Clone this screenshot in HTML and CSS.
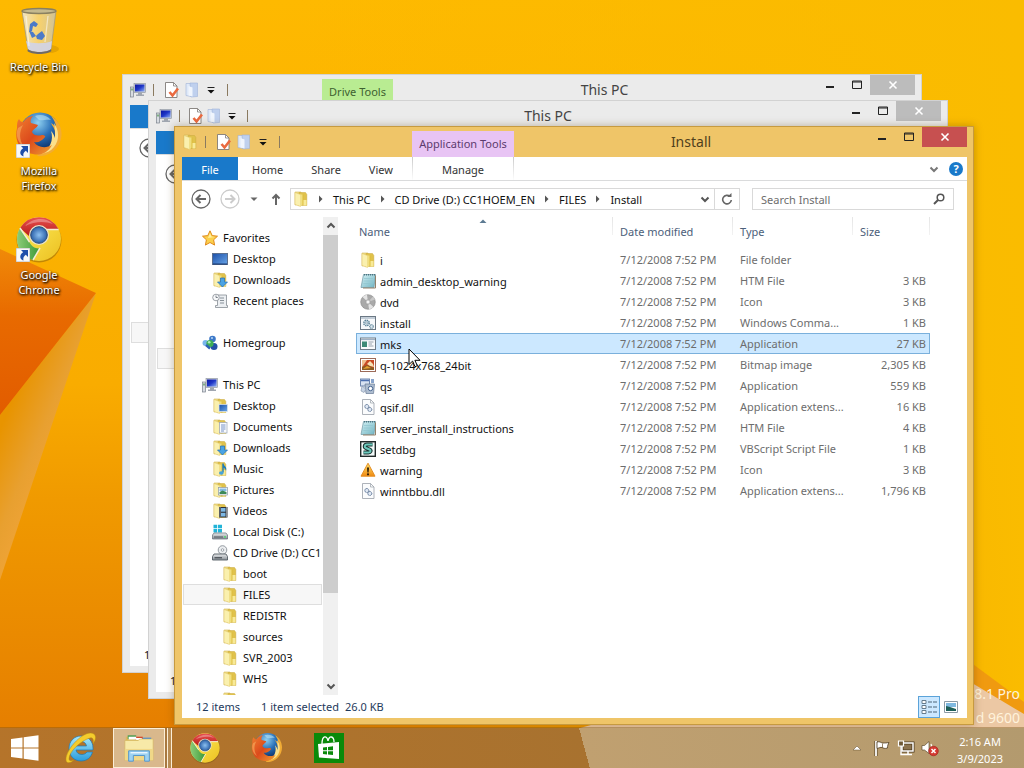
FILE: index.html
```html
<!DOCTYPE html>
<html lang="en">

<head>
    <meta charset="UTF-8">
    <meta name="viewport" content="width=device-width, initial-scale=1">
    <title>Install</title>
    <link rel="stylesheet" href="styles.css">
</head>

<body>

    <!-- Icon sprite -->
    <svg class="sprite" aria-hidden="true">
        <defs>
            <linearGradient id="g-folder" x1="0" y1="0" x2="1" y2="0">
                <stop offset="0" stop-color="#fbf0a0" />
                <stop offset="1" stop-color="#dcbc3c" />
            </linearGradient>
            <linearGradient id="g-blue" x1="0" y1="0" x2="1" y2="1">
                <stop offset="0" stop-color="#1b4fa8" />
                <stop offset="1" stop-color="#6aa6e8" />
            </linearGradient>
            <linearGradient id="g-screen" x1="0" y1="0" x2="1" y2="1">
                <stop offset="0" stop-color="#0a14a0" />
                <stop offset="0.5" stop-color="#2038c8" />
                <stop offset="1" stop-color="#8fb0f5" />
            </linearGradient>
            <linearGradient id="g-grey" x1="0" y1="0" x2="0" y2="1">
                <stop offset="0" stop-color="#e8eaec" />
                <stop offset="1" stop-color="#8a9096" />
            </linearGradient>
            <linearGradient id="g-note" x1="0" y1="0" x2="1" y2="1">
                <stop offset="0" stop-color="#d3f0f4" />
                <stop offset="1" stop-color="#6fb4c2" />
            </linearGradient>
            <linearGradient id="g-warn" x1="0" y1="0" x2="0" y2="1">
                <stop offset="0" stop-color="#ffe36a" />
                <stop offset="1" stop-color="#f08a12" />
            </linearGradient>
            <linearGradient id="g-bin" x1="0" y1="0" x2="1" y2="0">
                <stop offset="0" stop-color="#f0ead8" stop-opacity="0.9" />
                <stop offset="0.5" stop-color="#f4dc9c" stop-opacity="0.7" />
                <stop offset="1" stop-color="#c9c2a8" stop-opacity="0.9" />
            </linearGradient>
            <linearGradient id="g-fox" x1="0" y1="0" x2="1" y2="1">
                <stop offset="0" stop-color="#f08030" />
                <stop offset="0.5" stop-color="#dc4a1c" />
                <stop offset="1" stop-color="#f0a030" />
            </linearGradient>
            <radialGradient id="g-globe" cx="0.45" cy="0.25" r="0.7">
                <stop offset="0" stop-color="#8fd0f0" />
                <stop offset="0.5" stop-color="#2a70b8" />
                <stop offset="1" stop-color="#0c2a60" />
            </radialGradient>
            <radialGradient id="g-ball">
                <stop offset="0" stop-color="#8cc0f0" />
                <stop offset="1" stop-color="#2a60a8" />
            </radialGradient>
            <linearGradient id="g-cred" x1="0" y1="0" x2="0" y2="1">
                <stop offset="0" stop-color="#e85050" />
                <stop offset="1" stop-color="#b81c18" />
            </linearGradient>
            <linearGradient id="g-cgreen" x1="0" y1="0" x2="1" y2="0">
                <stop offset="0" stop-color="#8ccc78" />
                <stop offset="1" stop-color="#3c9a38" />
            </linearGradient>
            <linearGradient id="g-cyellow" x1="0" y1="0" x2="1" y2="1">
                <stop offset="0" stop-color="#fff060" />
                <stop offset="1" stop-color="#ecc020" />
            </linearGradient>
            <linearGradient id="g-ie" x1="0" y1="0" x2="0" y2="1">
                <stop offset="0" stop-color="#a8e8fc" />
                <stop offset="1" stop-color="#2a9cdc" />
            </linearGradient>
        </defs>

        <symbol id="folder" viewBox="0 0 16 16">
            <path d="M2 1h6v12l-6 1z" fill="#f2e08a" stroke="#d4b654" stroke-width="0.600" />
            <path d="M6 1.500h6.500l1.300 2v11H5z" fill="#e0c24c" stroke="#c9a83c" stroke-width="0.500" />
            <path d="M2 1.500l5.500 2v12L2 13.500z" fill="#faf0ae" stroke="#dcc264" stroke-width="0.500" />
            <path d="M7.500 3.500h3v9.500l-3 2.500z" fill="url(#g-folder)" />
            <path d="M10.500 9h3v5.500h-3z" fill="#f8ea98" />
        </symbol>

        <symbol id="newfolder" viewBox="0 0 16 16">
            <path d="M2 1.500h5v13l-5-1z" fill="#dfe9f8" stroke="#9fb2d6" stroke-width="0.600" />
            <path d="M6 1h7.500v13.500L7 15z" fill="#bfd0ee" stroke="#9fb4da" stroke-width="0.600" />
            <path d="M4.500 4l4 1.500v9l-4-1z" fill="#f0f5fd" />
        </symbol>

        <symbol id="pc" viewBox="0 0 16 16">
            <rect x="0.500" y="5" width="3" height="10" fill="#d8dce2" stroke="#7b828c" stroke-width="0.700" />
            <rect x="1.300" y="6.500" width="1.400" height="2" fill="#5a9c5a" />
            <rect x="4" y="1.500" width="11.500" height="9" fill="#c9ced8" stroke="#888f9c" stroke-width="0.600" />
            <rect x="5" y="2.500" width="9.500" height="7" fill="url(#g-screen)" />
            <path d="M8 10.500h4v2h2v1.500H6v-1.500h2z" fill="#a0a6b0" />
        </symbol>

        <symbol id="props" viewBox="0 0 16 16">
            <path d="M2.500.5h8l3.500 3.500v11.500H2.500z" fill="#fff" stroke="#807c78" stroke-width="0.900" />
            <path d="M10.500.5v3.500H14" fill="none" stroke="#807c78" stroke-width="0.800" />
            <path d="M6.500 10l3 3.500L15 6.500" fill="none" stroke="#ea6a40" stroke-width="2.600" />
        </symbol>

        <symbol id="star" viewBox="0 0 16 16">
            <path d="M8 .8l2.200 4.800 5.300.6-3.900 3.600 1 5.300L8 12.500l-4.600 2.600 1-5.300L.5 6.200l5.300-.6z" fill="#fbd04c" stroke="#e08a1c" stroke-width="1" />
            <path d="M8 3l1.400 3.500 3.400.4-6.800 1z" fill="#fff0a0" />
        </symbol>

        <symbol id="desktop" viewBox="0 0 16 16">
            <rect x="0.500" y="2.500" width="15" height="11" fill="url(#g-blue)" stroke="#5b6f8e" />
            <path d="M1 12.500h14v1H1z" fill="#16366e" />
        </symbol>

        <symbol id="downloads" viewBox="0 0 16 16">
            <use href="#folder" />
            <path d="M8.500 6h4v4h3l-5 5-5-5h3z" fill="#4aa3e4" stroke="#1f6cb4" stroke-width="0.700" />
        </symbol>

        <symbol id="recent" viewBox="0 0 16 16">
            <path d="M5.500 2h9v10.500h1v2H3.500v-2h2z" fill="#eceff2" stroke="#868d94" stroke-width="0.800" />
            <path d="M8 5h4M8 7.500h4M8 10h4" stroke="#7d868e" stroke-width="0.900" />
            <circle cx="4" cy="4.500" r="3.300" fill="#f8f9fa" stroke="#868d94" stroke-width="0.800" />
            <path d="M4 2.500v2h1.800" fill="none" stroke="#5d666e" stroke-width="0.800" />
        </symbol>

        <symbol id="homegroup" viewBox="0 0 16 16">
            <circle cx="10.500" cy="4" r="3.300" fill="#3c78c8" />
            <circle cx="3.500" cy="8" r="3" fill="#79b6ec" />
            <circle cx="12" cy="11.500" r="3.500" fill="#2450a8" />
            <circle cx="8" cy="8.500" r="3.600" fill="#3fae58" />
            <path d="M4 10l4 3.500" stroke="#2d62b4" stroke-width="2.400" />
            <circle cx="7.200" cy="7.300" r="1.300" fill="#b2ecba" />
            <circle cx="10" cy="3" r="1" fill="#b9d8f6" />
        </symbol>

        <symbol id="f-desktop" viewBox="0 0 16 16">
            <use href="#folder" />
            <rect x="7" y="6.500" width="8.500" height="7" fill="url(#g-blue)" stroke="#dde6f0" stroke-width="0.700" />
        </symbol>

        <symbol id="f-docs" viewBox="0 0 16 16">
            <use href="#folder" />
            <rect x="7.500" y="3.500" width="7.500" height="10.500" fill="#f8fafd" stroke="#97a3b5" stroke-width="0.700" />
            <path d="M9 6h4.500M9 8h4.500M9 10h4.500M9 12h3" stroke="#5679b8" stroke-width="0.800" />
        </symbol>

        <symbol id="f-music" viewBox="0 0 16 16">
            <use href="#folder" />
            <path d="M11 2.500v9" stroke="#1c7cba" stroke-width="1.400" />
            <path d="M11 2.500c.5 2.500 4.500 3 3 7.500-.3-2-1.500-3-3-3.500z" fill="#1c7cba" />
            <ellipse cx="9.300" cy="12" rx="2.300" ry="1.800" fill="#46a4dc" />
        </symbol>

        <symbol id="f-pics" viewBox="0 0 16 16">
            <use href="#folder" />
            <rect x="6.500" y="5.500" width="9" height="7.500" fill="#fff" stroke="#8b98a5" stroke-width="0.700" />
            <path d="M7.500 6.500h7v2.500h-7z" fill="#84bbe4" />
            <path d="M7.500 10l3-1.500 4 1.500v2h-7z" fill="#3e8a58" />
        </symbol>

        <symbol id="f-videos" viewBox="0 0 16 16">
            <use href="#folder" />
            <rect x="7" y="4" width="8.500" height="10.500" fill="#2c3138" />
            <rect x="9" y="5" width="4.500" height="3.700" fill="#7db8e4" />
            <rect x="9" y="9.800" width="4.500" height="3.700" fill="#7db8e4" />
            <path d="M8 4.500v10M14.500 4.500v10" stroke="#fff" stroke-width="0.900" stroke-dasharray="1 1" />
        </symbol>

        <symbol id="disk" viewBox="0 0 16 16">
            <path d="M1.500.8h3.700v3.400H1.500zM6 .8h4v3.400H6zM1.500 5h3.700v3.400H1.500zM6 5h4v3.400H6z" fill="#22b4d8" />
            <path d="M2 9h12l1.500 2v4H.5v-4z" fill="url(#g-grey)" stroke="#636c75" stroke-width="0.700" />
            <path d="M2 13h9" stroke="#444c55" stroke-width="0.900" />
            <rect x="12" y="12.300" width="2" height="1.200" fill="#3ce05c" />
        </symbol>

        <symbol id="cd" viewBox="0 0 16 16">
            <circle cx="10.500" cy="5" r="4.300" fill="#eceef0" stroke="#7c848c" stroke-width="0.800" />
            <circle cx="10.500" cy="5" r="1.300" fill="#fff" stroke="#7c848c" stroke-width="0.700" />
            <path d="M2 9h12l1.500 2.500V15H.5v-3.500z" fill="url(#g-grey)" stroke="#545b63" stroke-width="0.900" />
            <path d="M2.500 12.800h7.500" stroke="#30363c" />
        </symbol>

        <symbol id="note" viewBox="0 0 16 16">
            <path d="M3.500 1.500h12L14 14.500H1z" fill="url(#g-note)" stroke="#6d97a4" stroke-width="0.700" />
            <path d="M15.500 2.500V15H3" fill="none" stroke="#93816a" />
            <path d="M4 1.800h11" stroke="#4b7380" stroke-width="1.500" stroke-dasharray="1 1" />
            <path d="M4 5.500h9M3.700 8h9M3.400 10.500h9" stroke="#8fc4ce" stroke-width="0.700" />
        </symbol>

        <symbol id="disc" viewBox="0 0 16 16">
            <circle cx="8" cy="8" r="7.300" fill="#a9a9a9" stroke="#8a8a8a" stroke-width="0.600" />
            <path d="M8 8L2.500 3A7.300 7.300 0 0 1 7 .8zM8 8l5.500 5a7.300 7.300 0 0 1-4.500 2.200z" fill="#e4e4e4" />
            <path d="M8 8l7-2.500a7.300 7.300 0 0 0-2-3z" fill="#c8c8c8" />
            <circle cx="8" cy="8" r="2.400" fill="#d5d5d5" stroke="#8e8e8e" stroke-width="0.500" />
            <circle cx="8" cy="8" r="1" fill="#fff" />
        </symbol>

        <symbol id="batch" viewBox="0 0 16 16">
            <rect x="0.500" y="1.500" width="15" height="13" fill="#f7f9fb" stroke="#6b7884" />
            <path d="M1 3h14" stroke="#8fa2b4" />
            <circle cx="6.500" cy="8" r="2.700" fill="#d6e5ee" stroke="#5c8296" stroke-width="1.500" stroke-dasharray="1.400 0.700" />
            <circle cx="6.500" cy="8" r="1" fill="#fff" stroke="#5c8296" stroke-width="0.600" />
            <circle cx="11.500" cy="11.500" r="1.800" fill="#dfeaf1" stroke="#5c8296" stroke-width="1.200" stroke-dasharray="1 0.500" />
        </symbol>

        <symbol id="app" viewBox="0 0 16 16">
            <rect x="0.500" y="2" width="15" height="11.500" fill="#f8fafc" stroke="#6f7c88" />
            <path d="M1 3.500h14" stroke="#9fb1c4" stroke-width="1.300" />
            <rect x="2" y="5.500" width="5" height="5.500" fill="#3d8a76" />
            <path d="M8.500 6h5M8.500 8h3.500M8.500 10h5" stroke="#8e9aa6" stroke-width="0.900" />
        </symbol>

        <symbol id="bmp" viewBox="0 0 16 16">
            <rect x="0.500" y="1.500" width="15" height="13" fill="#fff" stroke="#9c6a58" />
            <rect x="2" y="3" width="12" height="10" fill="#c84a24" />
            <path d="M2 3h5L3 9l-1 1z" fill="#f0c090" />
            <path d="M7 7l3-3 3 3 1 3-4-1z" fill="#f6e2b4" />
            <path d="M2 13v-3l5-2 7 3v2z" fill="#8a5c22" />
            <path d="M3 12l4-3 4 2z" fill="#e8a030" />
        </symbol>

        <symbol id="setup" viewBox="0 0 16 16">
            <rect x="0.500" y="1" width="9" height="7" fill="#d9e3f2" stroke="#6e86ae" />
            <path d="M1 2.500h8" stroke="#4c70b0" stroke-width="1.500" />
            <path d="M5 6h9.500l-1 9.500H6z" fill="#aebdd0" stroke="#657993" stroke-width="0.700" />
            <path d="M2 8l4 3-2 3.500L1 13z" fill="#c8d4e4" stroke="#7d8fa8" stroke-width="0.600" />
            <circle cx="10.500" cy="10.500" r="2.200" fill="#fff" stroke="#43628e" />
            <path d="M11 1h3v4h-3z" fill="#88a4cc" />
        </symbol>

        <symbol id="dll" viewBox="0 0 16 16">
            <path d="M2.500.5h8l3.500 3.500v11.500H2.500z" fill="#fbfcfd" stroke="#99a0a8" stroke-width="0.800" />
            <path d="M10.500.5v3.500H14" fill="none" stroke="#99a0a8" stroke-width="0.700" />
            <circle cx="6.800" cy="7.500" r="2" fill="#e1eaf5" stroke="#5c7394" stroke-width="1" stroke-dasharray="1.400 0.400" />
            <circle cx="9.800" cy="10.500" r="2" fill="#e1eaf5" stroke="#5c7394" stroke-width="1" stroke-dasharray="1.400 0.400" />
        </symbol>

        <symbol id="script" viewBox="0 0 16 16">
            <rect x="0.700" y="0.700" width="14.600" height="14.600" fill="#f4fbfa" stroke="#222a2a" stroke-width="1.400" />
            <path d="M12.500 3.500H7c-2.500 0-3 2.500-1 3.500l3.500 1.500c2 1 1 3-1 3H3.500" fill="none" stroke="#17302e" stroke-width="4" />
            <path d="M12.500 3.500H7c-2.500 0-3 2.500-1 3.500l3.500 1.500c2 1 1 3-1 3H3.500" fill="none" stroke="#6cc9bd" stroke-width="2" />
        </symbol>

        <symbol id="warn" viewBox="0 0 16 16">
            <path d="M8 1.200l7 13H1z" fill="url(#g-warn)" stroke="#e38e24" stroke-width="1" stroke-linejoin="round" />
            <path d="M7 5.500h2l-.4 5H7.400z" fill="#2b1c08" />
            <circle cx="8" cy="12.300" r="1.100" fill="#2b1c08" />
        </symbol>

        <symbol id="chrome" viewBox="0 0 48 48">
            <circle cx="24" cy="25" r="22.500" fill="#6b4a10" opacity="0.400" />
            <circle cx="24" cy="24" r="22" fill="url(#g-cyellow)" />
            <path d="M5 13A22 22 0 0 1 43.500 14L24 14.500c-5 0-8.500 3-9.500 7z" fill="url(#g-cred)" />
            <path d="M5 13l10.500 16c2 3 5 4.500 9 4.500L18 45.200A22 22 0 0 1 5 13z" fill="url(#g-cgreen)" />
            <path d="M5 13l9.500 14M43.500 14.500H24M18 45l7-12" stroke="#f4ecd4" stroke-width="1.500" fill="none" />
            <path d="M10 11c8-9 21-9 28-2-8-3-18-3-28 2z" fill="#fff" opacity="0.300" />
            <circle cx="24" cy="20" r="10" fill="#e9e4cc" />
            <circle cx="24" cy="20" r="8.300" fill="url(#g-ball)" stroke="#2c4c78" stroke-width="1" />
        </symbol>

        <symbol id="firefox" viewBox="0 0 48 48">
            <circle cx="25" cy="22" r="20.500" fill="url(#g-globe)" />
            <path d="M20 5c5-2 12-1 16 4-4-1-9 1-12 0z" fill="#b7e2f5" opacity="0.600" />
            <path d="M36 5c9 5 13 16 9 26-4 10-14 15-23 14l5-5c8-1 13-6 14-14 0-7-3-10-5-14 3 2 4 3 5 5 0-5-2-8-5-12z" fill="#f2ac34" />
            <path d="M39 12c5 7 6 17 0 24-3 4-8 6-13 7 9-5 13-14 10-23 2 2 3 4 4 7 0-6 0-10-1-15z" fill="#fbe08a" />
            <path d="M4 8c1 2 2 3 4 3 3-4 6-6 10-6-2 2-3 5-2 7l7 2c-1 3-5 4-6 7 2 4 6 4 10 3 2 0 4 1 3 2-3 4-7 6-11 5 3 5 11 7 18 3-4 8-12 11-19 9C5 41-1 30 2 17c0-4 0-7 2-9z" fill="url(#g-fox)" />
            <path d="M8 14c-4 7-4 15 1 22-6-4-9-12-6-19z" fill="#f8b060" opacity="0.600" />
        </symbol>

        <symbol id="bin" viewBox="0 0 48 48">
            <ellipse cx="34" cy="42" rx="10" ry="4" fill="#a06a00" opacity="0.250" />
            <path d="M7 4h34l-5 38c-3 4-20 4-23 0z" fill="url(#g-bin)" stroke="#a39a7c" stroke-width="0.800" />
            <path d="M11 34c5 3 20 3 26 0l-1 8c-3 4-20 4-23 0z" fill="#d2d4e8" opacity="0.900" />
            <path d="M13 42c3 4 20 4 23 0l.4 2c-4 4-20 4-24 0z" fill="#6e6a68" />
            <ellipse cx="24" cy="4" rx="17" ry="2.500" fill="#c5b98e" stroke="#8a8060" stroke-width="1.300" />
            <path d="M15 17l4-3 4 3-2 3-3-1-1 5-3 1zM23 27l4-3 3 5-3 4-5-1-1-3zM14 24l4 1 3 4-4 2z" fill="#4c7ac8" />
            <path d="M33 9l-3 26M11 9l3 30" stroke="#fff" stroke-width="1.300" opacity="0.500" />
        </symbol>

        <symbol id="ie" viewBox="0 0 32 32">
            <path d="M16 4c7 0 12 5 12 12v2H11c.5 3 3 4.500 6 4.500 2 0 4-1 5-2.500h5.500C26 25.500 22 29 16 29 9 29 4 23.500 4 16.500S9 4 16 4zm-5 10h10.500c-.5-3-2.500-4.500-5.300-4.500S11.500 11 11 14z" fill="url(#g-ie)" stroke="#1d78b4" stroke-width="0.700" />
            <path d="M29 2c3 3 1 7-1 10 1-4 0-7-3-6C17 8 4 19 4 27c0 2 2 2 5 1-3 3-8 4-8 0C0 18 20-4 29 2z" fill="#f4cc2c" stroke="#b98a14" stroke-width="0.500" />
        </symbol>

        <symbol id="explorer" viewBox="0 0 34 32">
            <path d="M3 4h8l1 2h18v22H3z" fill="#dcb85c" />
            <path d="M5 2.500h9v4H5z" fill="#4c9c50" />
            <path d="M13 4h8v3h-8z" fill="#d4482c" />
            <path d="M21 5h9v3h-9z" fill="#4b8cd4" />
            <path d="M6 4h8v3H6zM14 5.500h6v2h-6zM22 6.500h7v2h-7z" fill="#fff" />
            <path d="M2 8h14l2-1.500h14V29H2z" fill="#f7e9a8" stroke="#d2b258" stroke-width="0.600" />
            <path d="M2 17h30v12H2z" fill="#f0d888" />
            <path d="M6 30V19h22v11h-5v-6H11v6z" fill="#9cd2f2" stroke="#4f94cc" stroke-width="1" />
            <path d="M8 21h18" stroke="#e6f6ff" stroke-width="1.500" />
        </symbol>

        <symbol id="store" viewBox="0 0 30 30">
            <path d="M0 0h30v30H0z" fill="#0a8a0a" />
            <path d="M4 11l21-2v17l-20-1.500z" fill="#fff" />
            <path d="M8 11c0-9 5-9 6-3 1-6 6-5 6 1" fill="none" stroke="#fff" stroke-width="1.300" />
            <path d="M9 14.500l4-.5v3.200H9zM14 13.900l5-.6v3.900h-5zM9 18.200h4v3.200l-4-.5zM14 18.200h5V22l-5-.5z" fill="#0a8a0a" />
        </symbol>

        <symbol id="winlogo" viewBox="0 0 28 26">
            <path d="M0 4l11.500-1.600v10H0zM12.700 2.200L27.500.2v12.200H12.700zM0 13.600h11.500v10L0 22zM12.700 13.600h14.800v12.200l-14.800-2z" fill="#fff" />
        </symbol>

        <symbol id="shortcut" viewBox="0 0 14 14">
            <path d="M0 0h14v14H0z" fill="#f8f8f8" stroke="#b8b8b8" />
            <path d="M5 2h7v7L9.800 6.800C7.500 8.500 7 10 7.500 12.500 3.500 11 3 7 7.200 4.300z" fill="#1f4eaa" />
        </symbol>

        <symbol id="flag" viewBox="0 0 18 18">
            <path d="M3 2v15" stroke="#4c3a1e" stroke-width="3" />
            <path d="M3 2v15" stroke="#fff" stroke-width="1.800" />
            <path d="M4 3c3-1 4 1 6 1s3 0 6-.5c-1 2-1.500 3-1.500 5.500-3 1-4 0-5.500-.5S6 9 4 9.500z" fill="#fff" stroke="#4c3a1e" stroke-width="0.800" />
            <path d="M9.500 4.500V9" stroke="#7c6440" stroke-width="0.800" />
        </symbol>

        <symbol id="network" viewBox="0 0 18 18">
            <path d="M5 4h11v8H5z" fill="#8c7450" stroke="#4c3a1e" stroke-width="3" />
            <path d="M5 4h11v8H5zM7 15.500h8M11 12.500v3" fill="none" stroke="#fff" stroke-width="1.500" />
            <path d="M1.500 2h5v5h-5z" fill="#6d5836" stroke="#fff" stroke-width="1.200" />
            <path d="M4 7v8.500h3" fill="none" stroke="#fff" stroke-width="1.400" />
        </symbol>

        <symbol id="speaker" viewBox="0 0 18 18">
            <path d="M1 6.500h2.500L8 2.500v12L3.500 11H1z" fill="#fff" stroke="#4c3a1e" stroke-width="0.600" />
            <path d="M10 5c1 2 1 5 0 7" fill="none" stroke="#fff" stroke-width="1.200" />
            <circle cx="12.500" cy="12" r="4.800" fill="#d43a32" stroke="#a01c18" stroke-width="0.600" />
            <path d="M10.500 10l4 4M14.500 10l-4 4" stroke="#fff" stroke-width="1.500" />
        </symbol>

        <symbol id="back" viewBox="0 0 20 20">
            <circle cx="10" cy="10" r="9" fill="none" stroke="currentColor" stroke-width="1.300" />
            <path d="M15 10H6M9.500 6L5.500 10l4 4" fill="none" stroke="currentColor" stroke-width="2" />
        </symbol>

        <symbol id="forward" viewBox="0 0 20 20">
            <circle cx="10" cy="10" r="9" fill="none" stroke="currentColor" stroke-width="1.300" />
            <path d="M5 10h9M10.500 6l4 4-4 4" fill="none" stroke="currentColor" stroke-width="2" />
        </symbol>

        <symbol id="more" viewBox="0 0 8 8">
            <path d="M0.500 1.500h7" stroke="#222" stroke-width="1" />
            <path d="M0.500 4h7L4 7.500z" fill="#111" />
        </symbol>

        <symbol id="tri-right" viewBox="0 0 8 8">
            <path d="M2 0.500L5.500 4 2 7.500z" fill="#555" />
        </symbol>

        <symbol id="chev-down" viewBox="0 0 12 12">
            <path d="M2.500 4.500L6 8l3.500-3.500" fill="none" stroke="currentColor" stroke-width="2" />
        </symbol>

        <symbol id="chev-up" viewBox="0 0 12 12">
            <path d="M2.500 7.500L6 4l3.500 3.500" fill="none" stroke="currentColor" stroke-width="2" />
        </symbol>

        <symbol id="minimize" viewBox="0 0 12 12">
            <path d="M2 8h8" stroke="currentColor" stroke-width="2" />
        </symbol>

        <symbol id="maximize" viewBox="0 0 12 12">
            <path d="M1.500 2h9v7.500h-9zM1.500 3h9" fill="none" stroke="currentColor" stroke-width="1" />
        </symbol>

        <symbol id="close" viewBox="0 0 12 12">
            <path d="M2.500 2.500l7 7M9.500 2.500l-7 7" stroke="#fff" stroke-width="1.600" />
        </symbol>
    </svg>

    <div class="desktop">

        <!-- Wallpaper -->
        <svg class="wallpaper" viewBox="0 0 1024 768" preserveAspectRatio="none" aria-hidden="true">
            <defs>
                <linearGradient id="w-base" x1="0" y1="0" x2="0" y2="1">
                    <stop offset="0" stop-color="#feb900" />
                    <stop offset="0.500" stop-color="#f9ac00" />
                    <stop offset="0.650" stop-color="#f09a00" />
                    <stop offset="1" stop-color="#e47a00" />
                </linearGradient>
                <linearGradient id="w-light" x1="0" y1="0" x2="1" y2="0">
                    <stop offset="0" stop-color="#fabc00" stop-opacity="0" />
                    <stop offset="1" stop-color="#fabc00" />
                </linearGradient>
                <linearGradient id="w-dark" x1="0" y1="0" x2="0" y2="1">
                    <stop offset="0" stop-color="#f08a08" />
                    <stop offset="0.400" stop-color="#e86a00" />
                    <stop offset="1" stop-color="#e25c00" />
                </linearGradient>
                <linearGradient id="w-pale" gradientUnits="userSpaceOnUse" x1="0" y1="430" x2="60" y2="455">
                    <stop offset="0" stop-color="#e89400" />
                    <stop offset="0.600" stop-color="#e8a030" />
                    <stop offset="1" stop-color="#f0a438" />
                </linearGradient>
            </defs>
            <path d="M0 0h1024v768H0z" fill="url(#w-base)" />
            <path d="M300 0h724v768H300z" fill="url(#w-light)" />
            <path d="M96 293L0 415v165z" fill="url(#w-pale)" />
            <path d="M0 249l96 44L0 415z" fill="url(#w-dark)" />
            <path d="M900 610l124 92v66H900z" fill="#f09a10" />
            <path d="M900 640l124 74v54H560l20-40z" fill="#ecc8a4" />
        </svg>

        <main class="workspace">

            <div class="shortcuts">
                <a class="shortcut" href="#">
                    <svg class="shortcut__icon"><use href="#bin" /></svg>
                    <span>Recycle Bin</span>
                </a>
                <a class="shortcut" href="#">
                    <svg class="shortcut__icon"><use href="#firefox" /></svg>
                    <svg class="shortcut__arrow"><use href="#shortcut" /></svg>
                    <span>Mozilla<br>Firefox</span>
                </a>
                <a class="shortcut" href="#">
                    <svg class="shortcut__icon"><use href="#chrome" /></svg>
                    <svg class="shortcut__arrow"><use href="#shortcut" /></svg>
                    <span>Google<br>Chrome</span>
                </a>
            </div>

            <p class="watermark">8.1 Pro<br>d 9600</p>

            <section class="window window--first">
                <header class="titlebar">
                    <div class="quick">
                        <svg class="icon"><use href="#pc" /></svg>
                        <i class="quick__line"></i>
                        <button class="quick__button" aria-label="Properties"><svg class="icon"><use href="#props" /></svg></button>
                        <button class="quick__button" aria-label="New folder"><svg class="icon"><use href="#newfolder" /></svg></button>
                        <button class="quick__more" aria-label="Customize toolbar"><svg class="icon--tiny"><use href="#more" /></svg></button>
                        <i class="quick__line"></i>
                    </div>
                    <div class="tooltab tooltab--drive">Drive Tools</div>
                    <h2 class="titlebar__name">This PC</h2>
                    <div class="controls">
                        <button aria-label="Minimize"><svg><use href="#minimize" /></svg></button>
                        <button aria-label="Maximize"><svg><use href="#maximize" /></svg></button>
                        <button class="controls__close" aria-label="Close"><svg><use href="#close" /></svg></button>
                    </div>
                </header>
                <div class="window__body">
                    <div class="stub__tab"></div>
                    <div class="stub__nav"><svg class="icon--nav"><use href="#back" /></svg></div>
                    <div class="stub__row"></div>
                    <div class="stub__status">1</div>
                </div>
            </section>

            <section class="window window--second">
                <header class="titlebar">
                    <div class="quick quick--short">
                        <svg class="icon"><use href="#pc" /></svg>
                        <i class="quick__line"></i>
                        <button class="quick__button" aria-label="Properties"><svg class="icon"><use href="#props" /></svg></button>
                        <button class="quick__button" aria-label="New folder"><svg class="icon"><use href="#newfolder" /></svg></button>
                        <button class="quick__more" aria-label="Customize toolbar"><svg class="icon--tiny"><use href="#more" /></svg></button>
                        <i class="quick__line"></i>
                    </div>
                    <h2 class="titlebar__name">This PC</h2>
                    <div class="controls">
                        <button aria-label="Minimize"><svg><use href="#minimize" /></svg></button>
                        <button aria-label="Maximize"><svg><use href="#maximize" /></svg></button>
                        <button class="controls__close" aria-label="Close"><svg><use href="#close" /></svg></button>
                    </div>
                </header>
                <div class="window__body">
                    <div class="stub__tab"></div>
                    <div class="stub__nav"><svg class="icon--nav"><use href="#back" /></svg></div>
                    <div class="stub__row"></div>
                    <div class="stub__status">1</div>
                </div>
            </section>

            <section class="window window--active">
                <header class="titlebar">
                    <div class="quick">
                        <svg class="icon"><use href="#folder" /></svg>
                        <i class="quick__line"></i>
                        <button class="quick__button" aria-label="Properties"><svg class="icon"><use href="#props" /></svg></button>
                        <button class="quick__button" aria-label="New folder"><svg class="icon"><use href="#newfolder" /></svg></button>
                        <button class="quick__more" aria-label="Customize toolbar"><svg class="icon--tiny"><use href="#more" /></svg></button>
                        <i class="quick__line"></i>
                    </div>
                    <div class="tooltab">Application Tools</div>
                    <h1 class="titlebar__name">Install</h1>
                    <div class="controls">
                        <button aria-label="Minimize"><svg><use href="#minimize" /></svg></button>
                        <button aria-label="Maximize"><svg><use href="#maximize" /></svg></button>
                        <button class="controls__close" aria-label="Close"><svg><use href="#close" /></svg></button>
                    </div>
                </header>

                <div class="window__body">
                    <div class="ribbon">
                        <div class="ribbon__main">
                            <button class="ribbon__tab ribbon__tab--file">File</button>
                            <button class="ribbon__tab">Home</button>
                            <button class="ribbon__tab">Share</button>
                            <button class="ribbon__tab">View</button>
                        </div>
                        <button class="ribbon__tab ribbon__tab--manage">Manage</button>
                        <button class="ribbon__expand" aria-label="Expand ribbon"><svg class="icon--small"><use href="#chev-down" /></svg></button>
                        <button class="ribbon__help" aria-label="Help">?</button>
                    </div>

                    <div class="navbar">
                        <button class="navbar__back" aria-label="Back"><svg class="icon--nav"><use href="#back" /></svg></button>
                        <button class="navbar__forward" aria-label="Forward"><svg class="icon--nav"><use href="#forward" /></svg></button>
                        <button class="navbar__recent" aria-label="Recent locations">
                            <svg class="icon--tiny" viewBox="0 0 8 8"><path d="M0.500 2.500h7L4 6z" fill="#666" /></svg>
                        </button>
                        <button class="navbar__up" aria-label="Up">
                            <svg class="icon" viewBox="0 0 16 16"><path d="M8 14V4M4.500 7.500L8 4l3.500 3.500" fill="none" stroke="#666" stroke-width="2" /></svg>
                        </button>
                        <div class="address">
                            <svg class="icon"><use href="#folder" /></svg>
                            <svg class="icon--tiny"><use href="#tri-right" /></svg>
                            <a href="#">This PC</a>
                            <svg class="icon--tiny"><use href="#tri-right" /></svg>
                            <a href="#">CD Drive (D:) CC1HOEM_EN</a>
                            <svg class="icon--tiny"><use href="#tri-right" /></svg>
                            <a href="#">FILES</a>
                            <svg class="icon--tiny"><use href="#tri-right" /></svg>
                            <a href="#">Install</a>
                            <button class="address__drop" aria-label="Previous locations"><svg class="icon--small"><use href="#chev-down" /></svg></button>
                            <button class="address__refresh" aria-label="Refresh">
                                <svg class="icon--small" viewBox="0 0 12 12"><path d="M9 3.500A4.300 4.300 0 1 0 10.300 7" fill="none" stroke="#666" stroke-width="1.600" /><path d="M6 4h4.500V0z" fill="#666" /></svg>
                            </button>
                        </div>
                        <div class="search">
                            <input class="search__input" type="text" placeholder="Search Install" aria-label="Search Install">
                            <svg class="search__icon" viewBox="0 0 12 12"><circle cx="7.500" cy="4.500" r="3.300" fill="none" stroke="#555" stroke-width="1.500" /><path d="M5 7L1 11" stroke="#555" stroke-width="2" /></svg>
                        </div>
                    </div>

                    <div class="content">
                        <nav class="tree">
                            <a class="tree__item" href="#"><svg class="icon"><use href="#star" /></svg>Favorites</a>
                            <a class="tree__item tree__item--sub" href="#"><svg class="icon"><use href="#desktop" /></svg>Desktop</a>
                            <a class="tree__item tree__item--sub" href="#"><svg class="icon"><use href="#downloads" /></svg>Downloads</a>
                            <a class="tree__item tree__item--sub" href="#"><svg class="icon"><use href="#recent" /></svg>Recent places</a>
                            <a class="tree__item tree__item--group" href="#"><svg class="icon"><use href="#homegroup" /></svg>Homegroup</a>
                            <a class="tree__item tree__item--group" href="#"><svg class="icon"><use href="#pc" /></svg>This PC</a>
                            <a class="tree__item tree__item--sub" href="#"><svg class="icon"><use href="#f-desktop" /></svg>Desktop</a>
                            <a class="tree__item tree__item--sub" href="#"><svg class="icon"><use href="#f-docs" /></svg>Documents</a>
                            <a class="tree__item tree__item--sub" href="#"><svg class="icon"><use href="#downloads" /></svg>Downloads</a>
                            <a class="tree__item tree__item--sub" href="#"><svg class="icon"><use href="#f-music" /></svg>Music</a>
                            <a class="tree__item tree__item--sub" href="#"><svg class="icon"><use href="#f-pics" /></svg>Pictures</a>
                            <a class="tree__item tree__item--sub" href="#"><svg class="icon"><use href="#f-videos" /></svg>Videos</a>
                            <a class="tree__item tree__item--sub" href="#"><svg class="icon"><use href="#disk" /></svg>Local Disk (C:)</a>
                            <a class="tree__item tree__item--sub" href="#"><svg class="icon"><use href="#cd" /></svg>CD Drive (D:) CC1</a>
                            <a class="tree__item tree__item--deep" href="#"><svg class="icon"><use href="#folder" /></svg>boot</a>
                            <a class="tree__item tree__item--deep tree__item--selected" href="#"><svg class="icon"><use href="#folder" /></svg>FILES</a>
                            <a class="tree__item tree__item--deep" href="#"><svg class="icon"><use href="#folder" /></svg>REDISTR</a>
                            <a class="tree__item tree__item--deep" href="#"><svg class="icon"><use href="#folder" /></svg>sources</a>
                            <a class="tree__item tree__item--deep" href="#"><svg class="icon"><use href="#folder" /></svg>SVR_2003</a>
                            <a class="tree__item tree__item--deep" href="#"><svg class="icon"><use href="#folder" /></svg>WHS</a>
                            <a class="tree__item tree__item--deep" href="#" aria-label="Folder"><svg class="icon"><use href="#folder" /></svg></a>
                        </nav>

                        <div class="scrollbar">
                            <button aria-label="Scroll up"><svg class="icon--small"><use href="#chev-up" /></svg></button>
                            <div class="scrollbar__track">
                                <div class="scrollbar__thumb"></div>
                            </div>
                            <button aria-label="Scroll down"><svg class="icon--small"><use href="#chev-down" /></svg></button>
                        </div>

                        <div class="pane">
                            <table class="files">
                                <thead>
                                    <tr>
                                        <th class="files__name">Name<svg class="files__sort" viewBox="0 0 8 4"><path d="M0.500 4L4 0.500 7.500 4z" fill="#5d7a92" /></svg></th>
                                        <th class="files__date">Date modified</th>
                                        <th class="files__type">Type</th>
                                        <th class="files__size">Size</th>
                                    </tr>
                                </thead>
                                <tbody>
                                    <tr>
                                        <td><svg class="icon"><use href="#folder" /></svg>i</td>
                                        <td>7/12/2008 7:52 PM</td>
                                        <td>File folder</td>
                                        <td></td>
                                    </tr>
                                    <tr>
                                        <td><svg class="icon"><use href="#note" /></svg>admin_desktop_warning</td>
                                        <td>7/12/2008 7:52 PM</td>
                                        <td>HTM File</td>
                                        <td>3 KB</td>
                                    </tr>
                                    <tr>
                                        <td><svg class="icon"><use href="#disc" /></svg>dvd</td>
                                        <td>7/12/2008 7:52 PM</td>
                                        <td>Icon</td>
                                        <td>3 KB</td>
                                    </tr>
                                    <tr>
                                        <td><svg class="icon"><use href="#batch" /></svg>install</td>
                                        <td>7/12/2008 7:52 PM</td>
                                        <td>Windows Comma...</td>
                                        <td>1 KB</td>
                                    </tr>
                                    <tr class="files__selected">
                                        <td><svg class="icon"><use href="#app" /></svg>mks</td>
                                        <td>7/12/2008 7:52 PM</td>
                                        <td>Application</td>
                                        <td>27 KB</td>
                                    </tr>
                                    <tr>
                                        <td><svg class="icon"><use href="#bmp" /></svg>q-1024x768_24bit</td>
                                        <td>7/12/2008 7:52 PM</td>
                                        <td>Bitmap image</td>
                                        <td>2,305 KB</td>
                                    </tr>
                                    <tr>
                                        <td><svg class="icon"><use href="#setup" /></svg>qs</td>
                                        <td>7/12/2008 7:52 PM</td>
                                        <td>Application</td>
                                        <td>559 KB</td>
                                    </tr>
                                    <tr>
                                        <td><svg class="icon"><use href="#dll" /></svg>qsif.dll</td>
                                        <td>7/12/2008 7:52 PM</td>
                                        <td>Application extens...</td>
                                        <td>16 KB</td>
                                    </tr>
                                    <tr>
                                        <td><svg class="icon"><use href="#note" /></svg>server_install_instructions</td>
                                        <td>7/12/2008 7:52 PM</td>
                                        <td>HTM File</td>
                                        <td>4 KB</td>
                                    </tr>
                                    <tr>
                                        <td><svg class="icon"><use href="#script" /></svg>setdbg</td>
                                        <td>7/12/2008 7:52 PM</td>
                                        <td>VBScript Script File</td>
                                        <td>1 KB</td>
                                    </tr>
                                    <tr>
                                        <td><svg class="icon"><use href="#warn" /></svg>warning</td>
                                        <td>7/12/2008 7:52 PM</td>
                                        <td>Icon</td>
                                        <td>3 KB</td>
                                    </tr>
                                    <tr>
                                        <td><svg class="icon"><use href="#dll" /></svg>winntbbu.dll</td>
                                        <td>7/12/2008 7:52 PM</td>
                                        <td>Application extens...</td>
                                        <td>1,796 KB</td>
                                    </tr>
                                </tbody>
                            </table>
                        </div>
                    </div>

                    <footer class="status">
                        <span class="status__count">12 items</span>
                        <span>1 item selected</span>
                        <span class="status__size">26.0 KB</span>
                        <button class="status__view status__view--active" aria-label="Details view">
                            <svg class="icon" viewBox="0 0 16 16"><path d="M1 1.500h4v3H1zM1 6.500h4v3H1zM1 11.500h4v3H1z" fill="#fff" stroke="#667c8e" /><path d="M7 3h4M12 3h4M7 8h4M12 8h4M7 13h4M12 13h4" stroke="#4c6478" stroke-width="1.200" /></svg>
                        </button>
                        <button class="status__view" aria-label="Thumbnail view">
                            <svg class="icon" viewBox="0 0 16 16"><path d="M1.500 2.500h13v11h-13z" fill="#fff" stroke="#8c9aa5" /><path d="M3 4h10v4H3z" fill="#7fb9e0" /><path d="M3 7l4 1 6 2v2H3z" fill="#1e5f58" /></svg>
                        </button>
                    </footer>
                </div>
            </section>

            <svg class="cursor" viewBox="0 0 13 20" aria-hidden="true">
                <path d="M1 1v15.500l3.600-3.400 2.400 5.600 2.300-1-2.400-5.400H12z" fill="#fff" stroke="#000" />
            </svg>
        </main>

        <footer class="taskbar">
            <button class="taskbar__start" aria-label="Start"><svg><use href="#winlogo" /></svg></button>
            <button class="taskbar__app" aria-label="Internet Explorer"><svg><use href="#ie" /></svg></button>
            <button class="taskbar__app taskbar__app--open" aria-label="File Explorer">
                <span class="taskbar__stack"><svg><use href="#explorer" /></svg></span>
            </button>
            <button class="taskbar__app" aria-label="Google Chrome"><svg><use href="#chrome" /></svg></button>
            <button class="taskbar__app" aria-label="Mozilla Firefox"><svg><use href="#firefox" /></svg></button>
            <button class="taskbar__app taskbar__app--store" aria-label="Store"><svg><use href="#store" /></svg></button>
            <div class="tray">
                <button aria-label="Show hidden icons"><svg class="icon--tiny" viewBox="0 0 8 8"><path d="M0 6h8L4 2z" fill="#fff" stroke="#5c4828" stroke-width="0.500" /></svg></button>
                <button aria-label="Action Center"><svg class="icon--tray"><use href="#flag" /></svg></button>
                <button aria-label="Network"><svg class="icon--tray"><use href="#network" /></svg></button>
                <button aria-label="Volume muted"><svg class="icon--tray"><use href="#speaker" /></svg></button>
                <div class="tray__clock">2:16 AM<br>3/9/2023</div>
            </div>
        </footer>
    </div>

</body>

</html>
```
FILE: styles.css
```css
* {
    box-sizing: border-box;
    padding: 0;
    margin: 0;
}

body {
    font-family: "Noto Sans", "Open Sans", sans-serif;
    font-size: 11px;
    line-height: 15px;
    color: #111;
}

button {
    display: flex;
    align-items: center;
    justify-content: center;
    border: none;
    background: none;
    font: inherit;
    color: inherit;
}

a {
    color: inherit;
    text-decoration: none;
}

svg {
    flex-shrink: 0;
}

.sprite {
    position: absolute;
    width: 0;
    height: 0;
}

.icon {
    width: 16px;
    height: 16px;
}

.icon--tiny {
    width: 8px;
    height: 8px;
}

.icon--small {
    width: 12px;
    height: 12px;
}

.icon--nav {
    width: 20px;
    height: 20px;
}

.icon--tray {
    width: 18px;
    height: 18px;
}

/* Desktop */

.desktop {
    position: relative;
    display: flex;
    flex-direction: column;
    height: 100vh;
    overflow: hidden;
}

.wallpaper {
    position: absolute;
    width: 100%;
    height: 100%;
}

.workspace {
    position: relative;
    flex: 1;
}

.shortcuts {
    display: grid;
    grid-template-columns: 76px;
    grid-auto-rows: 104px;
    padding: 7px 1px;
}

.shortcut {
    position: relative;
    display: flex;
    flex-direction: column;
    align-items: center;
    gap: 4px;
    text-align: center;
    color: #fff;
    text-shadow: 1px 1px 2px #000, 0 1px 3px #000;
}

.shortcut__icon {
    width: 48px;
    height: 48px;
}

.shortcut__arrow {
    position: absolute;
    left: 15px;
    top: 33px;
    width: 14px;
    height: 14px;
}

.watermark {
    position: absolute;
    right: 4px;
    bottom: -2px;
    font-size: 14px;
    line-height: 24px;
    text-align: right;
    color: #fff3dc;
}

/* Windows */

.window {
    position: absolute;
    display: flex;
    flex-direction: column;
    padding: 0 6px 6px 7px;
    border: 1px solid #d2d2d2;
    background-color: #ebebeb;
}

.window--first {
    inset: 74px 102px 55px 122px;
}

.window--second {
    inset: 100px 76px 29px 148px;
}

.window--active {
    inset: 126px 50px 3px 174px;
    border-color: #c69a40;
    background-color: #efc568;
    box-shadow: 0 0 8px rgba(90, 60, 0, 0.35);
}

.window__body {
    display: flex;
    flex-direction: column;
    flex: 1;
    min-height: 0;
    background-color: #fff;
}

.titlebar {
    display: flex;
    height: 30px;
}

.quick {
    display: flex;
    flex-shrink: 0;
    align-items: center;
    width: 230px;
}

.window--first .quick {
    width: 192px;
}

.window--second .quick {
    width: 98px;
}

.quick__line {
    width: 1px;
    height: 12px;
    margin: 0 6px 0 7px;
    background-color: #8a7a60;
}

.quick__button {
    width: 21px;
}

.quick__more {
    width: 18px;
}

.tooltab {
    width: 102px;
    margin-top: 4px;
    line-height: 26px;
    text-align: center;
    white-space: nowrap;
    color: #5c3b6e;
    background-color: #e8c4f4;
}

.tooltab--drive {
    width: 71px;
    color: #3e6130;
    background-color: #b9ec92;
}

.titlebar__name {
    flex: 1;
    font-size: 14px;
    font-weight: normal;
    line-height: 29px;
    text-align: center;
    color: #444;
}

.window--active .titlebar__name {
    color: #50401c;
}

.controls {
    display: flex;
    height: 20px;
}

.controls button {
    width: 27px;
    color: #222;
}

.controls svg {
    width: 12px;
    height: 12px;
}

.controls .controls__close {
    width: 45px;
    background-color: #bcbcbc;
}

.window--active .controls__close {
    background-color: #c75050;
}

/* Parts of the back windows that stay visible */

.stub__tab {
    width: 56px;
    height: 23px;
    background-color: #1979ca;
}

.stub__nav {
    display: flex;
    align-items: center;
    height: 38px;
    padding-left: 9px;
    border-top: 1px solid #dadbdc;
    color: #666;
}

.stub__row {
    width: 140px;
    height: 21px;
    margin: 156px 0 auto 1px;
    border: 1px solid #dedede;
    background-color: #f7f7f7;
}

.stub__status {
    padding-left: 14px;
    line-height: 23px;
}

/* Ribbon */

.ribbon {
    display: flex;
    align-items: center;
    height: 24px;
    border-bottom: 1px solid #dadbdc;
    color: #333;
}

.ribbon__main {
    display: flex;
    width: 230px;
}

.ribbon__tab {
    flex-shrink: 0;
    height: 23px;
    padding: 2px 14px 0;
}

.ribbon__tab--file {
    width: 56px;
    color: #fff;
    background-color: #1979ca;
}

.ribbon__tab--manage {
    width: 102px;
    border: 1px solid;
    border-width: 0 1px;
    border-image: linear-gradient(#c8c8c8, #fff) 1;
}

.ribbon__expand {
    width: 22px;
    margin-left: auto;
    color: #777;
}

.ribbon__help {
    width: 14px;
    height: 14px;
    margin: 0 4px;
    border-radius: 50%;
    font-weight: bold;
    color: #fff;
    background-color: #1979ca;
}

/* Address row */

.navbar {
    display: flex;
    align-items: center;
    height: 36px;
    padding: 0 13px 0 9px;
}

.navbar__back {
    color: #666;
}

.navbar__forward {
    margin-left: 9px;
    color: #ccc;
}

.navbar__recent {
    margin-left: 10px;
}

.navbar__up {
    margin: 0 6px 0 10px;
}

.address {
    display: flex;
    align-items: center;
    flex: 1;
    gap: 8px;
    height: 22px;
    padding-left: 2px;
    border: 1px solid #d9d9d9;
    white-space: nowrap;
}

.address__drop {
    width: 18px;
    margin-left: auto;
    color: #555;
}

.address__refresh {
    width: 25px;
    height: 20px;
    margin-left: -8px;
    border-left: 1px solid #d9d9d9;
}

.search {
    display: flex;
    align-items: center;
    width: 202px;
    height: 22px;
    margin-left: 12px;
    padding: 0 8px;
    border: 1px solid #d9d9d9;
}

.search__input {
    flex: 1;
    min-width: 0;
    border: none;
    outline: none;
    font: inherit;
}

.search__input::placeholder {
    color: #6d6d6d;
}

.search__icon {
    width: 12px;
    height: 12px;
}

/* Folder tree */

.content {
    display: flex;
    flex: 1;
    min-height: 0;
}

.tree {
    display: flex;
    flex-direction: column;
    width: 140px;
    padding: 10px 0 0 1px;
    overflow: hidden;
}

.tree__item {
    display: flex;
    flex-shrink: 0;
    align-items: center;
    gap: 5px;
    height: 21px;
    padding-left: 19px;
    white-space: nowrap;
}

.tree__item--sub {
    padding-left: 29px;
}

.tree__item--deep {
    padding-left: 39px;
}

.tree__item--group {
    margin-top: 21px;
}

.tree__item--selected {
    padding-left: 38px;
    border: 1px solid #dedede;
    background-color: #f7f7f7;
}

.scrollbar {
    display: flex;
    flex-direction: column;
    width: 16px;
    border-left: 1px solid #fff;
    background-color: #f0f0f0;
    color: #555;
}

.scrollbar button {
    height: 18px;
}

.scrollbar__track {
    flex: 1;
}

.scrollbar__thumb {
    height: 81%;
    background-color: #cdcdcd;
}

/* File list */

.pane {
    flex: 1;
    padding: 0 37px 0 18px;
}

.files {
    width: 100%;
    table-layout: fixed;
    border-collapse: collapse;
    white-space: nowrap;
    color: #6d6d6d;
}

.files th {
    position: relative;
    height: 32px;
    padding: 0 0 4px 7px;
    font-weight: normal;
    text-align: left;
    color: #4c607a;
    background: linear-gradient(#e5e5e5, #f2f2f2) right top / 1px 18px no-repeat;
}

.files th:first-child {
    padding-left: 3px;
}

.files__date,
.files__type {
    width: 120px;
}

.files__size {
    width: 77px;
}

.files__sort {
    position: absolute;
    left: 48%;
    top: 2px;
    width: 8px;
    height: 4px;
}

.files td {
    height: 21px;
    padding-left: 7px;
    overflow: hidden;
}

.files td:first-child {
    padding-left: 4px;
    color: #111;
}

.files td:last-child {
    padding-right: 4px;
    text-align: right;
}

.files td .icon {
    margin-right: 4px;
    vertical-align: text-bottom;
}

.files__selected td {
    background-color: #cce8ff;
    box-shadow: inset 0 1px #7ab0dc, inset 0 -1px #7ab0dc;
}

.files__selected td:first-child {
    box-shadow: inset 1px 1px #7ab0dc, inset 0 -1px #7ab0dc;
}

.files__selected td:last-child {
    box-shadow: inset -1px 1px #7ab0dc, inset 0 -1px #7ab0dc;
}

/* Status bar */

.status {
    display: flex;
    align-items: center;
    height: 23px;
    padding: 0 5px 0 14px;
    color: #1e395b;
}

.status__count {
    margin-right: 21px;
}

.status__size {
    margin: 0 auto 0 6px;
}

.status__view {
    width: 22px;
    height: 22px;
}

.status__view--active {
    border: 1px solid #5ba3d9;
    background-color: #cce8ff;
}

.cursor {
    position: absolute;
    left: 408px;
    top: 348px;
    width: 13px;
    height: 20px;
}

/* Taskbar */

.taskbar {
    position: relative;
    display: flex;
    height: 40px;
    background: linear-gradient(75deg, #b5742a, #a8722f 57%, #c0a070 57%, #b39a6e);
    box-shadow: 0 -1px rgba(120, 80, 20, 0.4);
}

.taskbar__start {
    width: 50px;
}

.taskbar__start svg {
    width: 28px;
    height: 26px;
}

.taskbar__app {
    width: 62px;
}

.taskbar__app svg {
    width: 32px;
    height: 32px;
}

.taskbar__app--store svg {
    width: 30px;
    height: 30px;
}

.taskbar__stack {
    display: flex;
    align-items: center;
    justify-content: center;
    width: 52px;
    height: 40px;
    border: 1px solid #fbeed8;
    background-color: #d9b88c;
    box-shadow: 2px 0 #a87840, 3px 0 #fbeed8, 6px 0 #b88c54, 7px 0 #fbeed8;
}

.taskbar__app--open {
    justify-content: flex-start;
    padding-left: 1px;
}

.tray {
    display: flex;
    align-items: center;
    gap: 6px;
    margin-left: auto;
    padding-right: 21px;
}

.tray button:first-child {
    margin-right: 6px;
}

.tray__clock {
    padding: 3px 0 0 12px;
    line-height: 17px;
    text-align: center;
    color: #fff;
}
```
